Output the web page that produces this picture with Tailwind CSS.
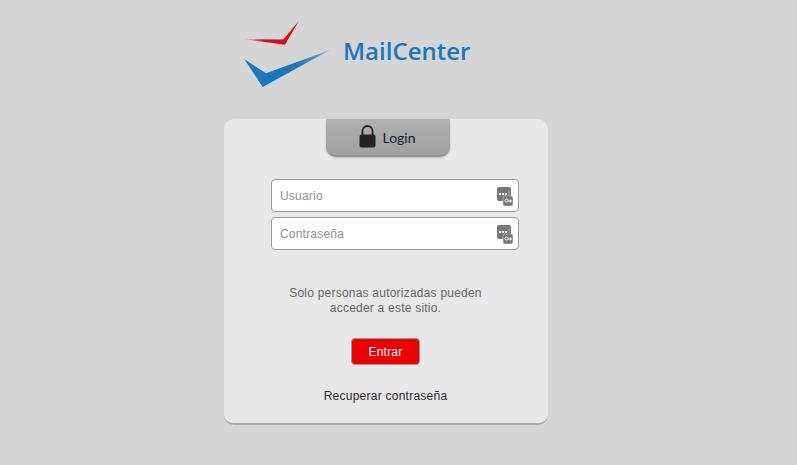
<!DOCTYPE html>
<html lang="es">
<head>
<meta charset="utf-8">
<script src="https://cdn.jsdelivr.net/npm/@tailwindcss/browser@4"></script>
</head>
<body class="bg-[#d5d5d5] h-[465px] overflow-hidden font-['Liberation_Sans',Arial,sans-serif]">
<div class="w-[324px] ml-[224px] flex flex-col">
  <header class="h-[119px] flex items-start pl-[20px] pt-[20px]">
    <svg class="w-[87px] h-[67px] shrink-0" viewBox="244 20 87 67" aria-hidden="true">
      <defs>
        <linearGradient id="r" x1="0" x2="1" y1="0" y2="0"><stop offset="0" stop-color="#e2001a" stop-opacity=".25"/><stop offset=".35" stop-color="#d90a1e"/><stop offset="1" stop-color="#dd0a20"/></linearGradient>
        <linearGradient id="b" x1="0" x2="1" y1="0" y2="0"><stop offset="0" stop-color="#1878be"/><stop offset=".6" stop-color="#1878be"/><stop offset="1" stop-color="#1878be" stop-opacity=".5"/></linearGradient>
      </defs>
      <polygon points="245,39.3 283.3,39.6 298.8,21 285,44.8" fill="url(#r)"/>
      <polygon points="244.3,59.3 266,73.3 330,50 262.7,86.9" fill="url(#b)"/>
    </svg>
    <span class="ml-[12px] mt-[14px] text-[24px] leading-[33px] font-semibold text-[#1878be] font-['Open_Sans',sans-serif]">MailCenter</span>
  </header>
  <main class="h-[306px] bg-[#e8e8e8] rounded-[10px] border-b-2 border-[#aaaaaa] flex flex-col items-center">
    <div class="w-[124px] h-[38px] ml-[4px] bg-linear-to-b from-[#b0b0b0] to-[#a0a0a0] rounded-b-[10px] border-b-2 border-[#8f8f8f] shadow-[0_1px_2px_rgba(0,0,0,0.2)] flex items-center justify-center gap-[6px] pr-[1px]">
      <svg class="w-[17px] h-[23px] -mt-[1px]" viewBox="0 0 17 23" aria-hidden="true">
        <path d="M3.500 10V6a5 5 0 0 1 10 0V10" fill="none" stroke="#222" stroke-width="1.800"/>
        <rect x="0.500" y="9.500" width="16" height="13" rx="2" fill="#222"/>
      </svg>
      <span class="text-[14px] text-[#12222e] font-['Lato',sans-serif] mt-[1px]">Login</span>
    </div>
    <form class="w-[248px] ml-[18px] mt-[22px] flex flex-col gap-[5px]">
      <div class="h-[33px] bg-white border border-[#999999] rounded-[4px] flex items-center justify-between pl-[8px] pr-[5px]">
        <span class="text-[12px] tracking-[0.2px] text-[#909090]">Usuario</span>
        <svg class="w-[16px] h-[19px] mt-[1px]" viewBox="0 0 16 19" aria-hidden="true">
          <rect x="0" y="0" width="14" height="14" rx="2" fill="#777"/>
          <rect x="2" y="6" width="2" height="2" fill="#fff"/><rect x="5" y="6" width="2" height="2" fill="#fff"/><rect x="8" y="6" width="2" height="2" fill="#fff"/><rect x="11.500" y="3" width="1" height="5" fill="#aaa"/>
          <rect x="6" y="9" width="10" height="10" rx="2" fill="#777" stroke="#d8d8d8" stroke-width=".5"/>
          <circle cx="9.500" cy="13.500" r="1.500" fill="none" stroke="#fff"/><path d="M11 14H15M13.500 12.500v3" stroke="#fff"/>
        </svg>
      </div>
      <div class="h-[33px] bg-white border border-[#999999] rounded-[4px] flex items-center justify-between pl-[8px] pr-[5px]">
        <span class="text-[12px] tracking-[0.2px] text-[#909090]">Contraseña</span>
        <svg class="w-[16px] h-[19px] mt-[1px]" viewBox="0 0 16 19" aria-hidden="true">
          <rect x="0" y="0" width="14" height="14" rx="2" fill="#777"/>
          <rect x="2" y="6" width="2" height="2" fill="#fff"/><rect x="5" y="6" width="2" height="2" fill="#fff"/><rect x="8" y="6" width="2" height="2" fill="#fff"/><rect x="11.500" y="3" width="1" height="5" fill="#aaa"/>
          <rect x="6" y="9" width="10" height="10" rx="2" fill="#777" stroke="#d8d8d8" stroke-width=".5"/>
          <circle cx="9.500" cy="13.500" r="1.500" fill="none" stroke="#fff"/><path d="M11 14H15M13.500 12.500v3" stroke="#fff"/>
        </svg>
      </div>
    </form>
    <p class="mt-[36px] ml-[-1px] w-[220px] text-center text-[12px] tracking-[0.22px] leading-[15px] text-[#666666]">Solo personas autorizadas pueden acceder a este sitio.</p>
    <button type="button" class="mt-[22px] -ml-[2px] w-[69px] h-[27px] bg-[#ee0000] border border-[#999999] rounded-[4px] text-white text-[12px] tracking-[0.2px] pl-[1px]">Entrar</button>
    <a class="mt-[24px] -ml-[1px] text-[12px] tracking-[0.25px] leading-[15px] text-[#2a2a2a]">Recuperar contraseña</a>
  </main>
</div>
</body>
</html>
